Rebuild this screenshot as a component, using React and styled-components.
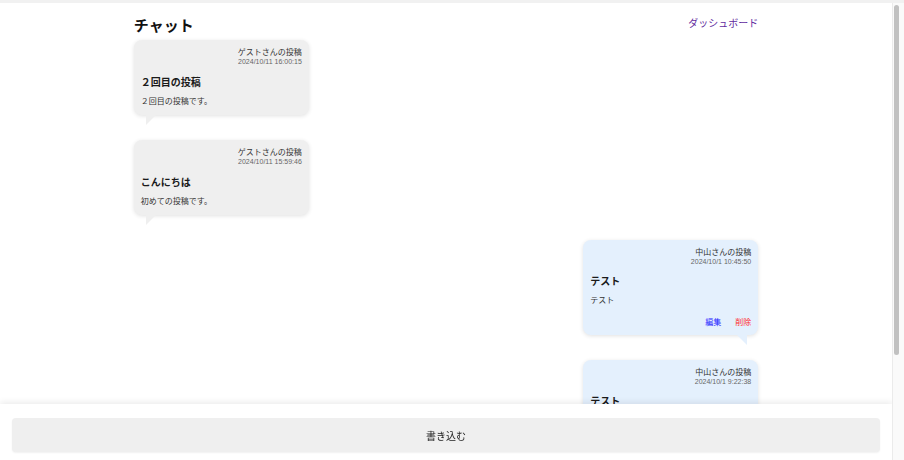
import React from "react";
import styled, { createGlobalStyle, css } from "styled-components";

const GlobalStyle = createGlobalStyle`
  html, body { margin: 0; padding: 0; background: #fff; overflow: hidden; }
  body {
    border-top: 3px solid #f1f1f1;
    font-family: "Noto Sans CJK JP", "Noto Sans", "Liberation Sans", sans-serif;
    color: #222;
  }
`;

const Frame = styled.div`
  display: flex;
  height: calc(100vh - 3px);
`;

const Scroller = styled.div`
  flex: 1;
  min-width: 0;
  overflow-y: auto;
  scrollbar-width: none;
  &::-webkit-scrollbar { display: none; }
`;

const ScrollRail = styled.div`
  width: 12px;
  flex: 0 0 12px;
  background: #fafafa;
  border-left: 1px solid #ebebeb;
  padding: 2px 5px 0 1px;
  box-sizing: border-box;
`;

const ScrollThumb = styled.div`
  height: 350px;
  border-radius: 3px;
  background: #c1c1c1;
`;

const Page = styled.div`
  padding: 12px 0 89px;
`;

const Container = styled.main`
  width: 70%;
  margin: 0 auto;
`;

const Header = styled.header`
  display: flex;
  justify-content: space-between;
  align-items: flex-start;
  margin-bottom: 5px;
`;

const Title = styled.h1`
  margin: 0;
  font-size: 15px;
  line-height: 20px;
  font-weight: 700;
  color: #111;
`;

const NavLink = styled.a`
  font-size: 10px;
  line-height: 14px;
  color: #5f2a9e;
  text-decoration: none;
  margin-top: 1px;
`;

const PostList = styled.div`
  display: flex;
  flex-direction: column;
  gap: 25px;
`;

const Bubble = styled.article`
  position: relative;
  width: 175px;
  box-sizing: border-box;
  padding: 6px 7px 8px;
  border-radius: 8px;
  background: ${(p) => (p.$mine ? "#e4f0fd" : "#efefef")};
  box-shadow: 0 1px 4px rgba(0, 0, 0, 0.12);
  align-self: ${(p) => (p.$mine ? "flex-end" : "flex-start")};

  &::after {
    content: "";
    position: absolute;
    top: 100%;
    width: 0;
    height: 0;
    border-top: 10px solid ${(p) => (p.$mine ? "#e4f0fd" : "#efefef")};
    ${(p) =>
      p.$mine
        ? css`
            right: 11px;
            border-left: 10px solid transparent;
          `
        : css`
            left: 12px;
            border-right: 10px solid transparent;
          `}
  }
`;

const Meta = styled.div`
  text-align: right;
`;

const Author = styled.div`
  font-size: 8px;
  line-height: 11px;
  color: #333;
`;

const Stamp = styled.div`
  font-family: "Liberation Sans", sans-serif;
  font-size: 7px;
  line-height: 9px;
  color: #666;
`;

const PostTitle = styled.h3`
  margin: ${(p) => (p.$tight ? "8px" : "9px")} 0 0;
  font-size: 10px;
  line-height: 14px;
  font-weight: 700;
  color: #1a1a1a;
`;

const Body = styled.p`
  margin: 6px 0 0;
  font-size: 8px;
  line-height: 12px;
  color: #333;
`;

const Actions = styled.div`
  display: flex;
  justify-content: flex-end;
  gap: 14px;
  margin-top: 10px;
`;

const ActionLink = styled.a`
  font-size: 8px;
  line-height: 11px;
  text-decoration: none;
  color: ${(p) => (p.$danger ? "#ff2d2d" : "#2323ff")};
  cursor: pointer;
`;

const BottomBar = styled.footer`
  position: sticky;
  bottom: 0;
  background: #fff;
  padding: 14px 12px 8px;
  box-shadow: 0 -2px 6px rgba(0, 0, 0, 0.08);
`;

const WriteButton = styled.button`
  display: block;
  width: 100%;
  height: 34px;
  border: none;
  border-radius: 4px;
  background: #efefef;
  font-family: "Noto Sans CJK JP", "Noto Sans", sans-serif;
  font-size: 10px;
  color: #222;
  box-shadow: 0 1px 2px rgba(0, 0, 0, 0.06);
`;

const posts = [
  { id: 1, author: "ゲストさん", time: "2024/10/11 16:00:15", title: "２回目の投稿", body: "２回目の投稿です。", mine: false },
  { id: 2, author: "ゲストさん", time: "2024/10/11 15:59:46", title: "こんにちは", body: "初めての投稿です。", mine: false },
  { id: 3, author: "中山さん", time: "2024/10/1 10:45:50", title: "テスト", body: "テスト", mine: true },
  { id: 4, author: "中山さん", time: "2024/10/1 9:22:38", title: "テスト", body: "テスト", mine: true },
];

function Post({ post }) {
  return (
    <Bubble $mine={post.mine}>
      <Meta>
        <Author>{post.author}の投稿</Author>
        <Stamp>{post.time}</Stamp>
      </Meta>
      <PostTitle $tight={post.mine}>{post.title}</PostTitle>
      <Body>{post.body}</Body>
      {post.mine && (
        <Actions>
          <ActionLink>編集</ActionLink>
          <ActionLink $danger>削除</ActionLink>
        </Actions>
      )}
    </Bubble>
  );
}

export default function App() {
  return (
    <>
      <GlobalStyle />
      <Frame>
        <Scroller>
          <Page>
            <Container>
              <Header>
                <Title>チャット</Title>
                <NavLink href="#">ダッシュボード</NavLink>
              </Header>
              <PostList>
                {posts.map((p) => (
                  <Post key={p.id} post={p} />
                ))}
              </PostList>
            </Container>
          </Page>
          <BottomBar>
            <WriteButton>書き込む</WriteButton>
          </BottomBar>
        </Scroller>
        <ScrollRail aria-hidden="true">
          <ScrollThumb />
        </ScrollRail>
      </Frame>
    </>
  );
}
